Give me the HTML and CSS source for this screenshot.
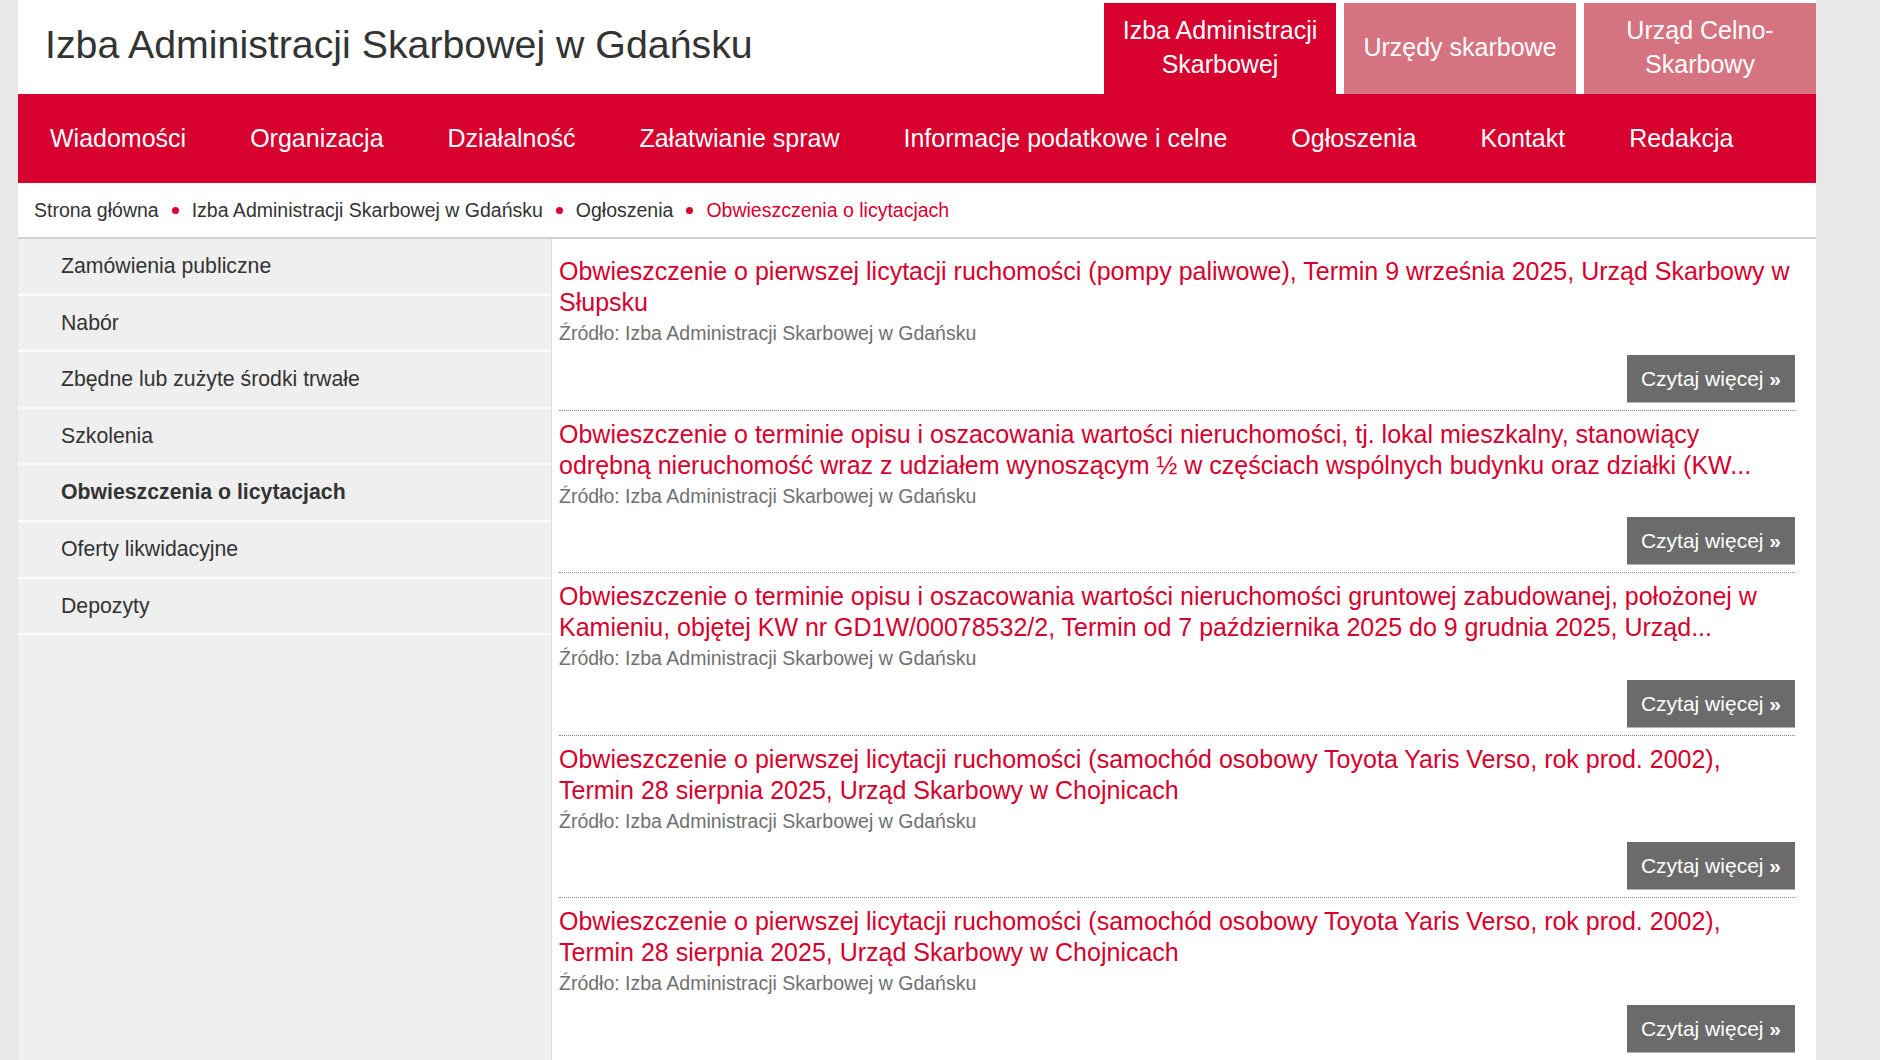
FILE: index.html
```html
<!DOCTYPE html>
<html lang="pl">
<head>
  <meta charset="UTF-8">
  <meta name="viewport" content="width=device-width, initial-scale=1.0">
  <title>Obwieszczenia o licytacjach - Izba Administracji Skarbowej w Gdańsku</title>
  <link rel="stylesheet" href="styles.css">
</head>
<body>
  <div class="page">
    <header class="top">
      <div class="siteName">Izba Administracji Skarbowej w Gdańsku</div>
      <div class="tabs">
        <a class="tab active" href="#">Izba Administracji<br>Skarbowej</a>
        <a class="tab" href="#">Urzędy skarbowe</a>
        <a class="tab" href="#">Urząd Celno-<br>Skarbowy</a>
      </div>
    </header>

    <nav class="mainMenu">
      <a href="#">Wiadomości</a>
      <a href="#">Organizacja</a>
      <a href="#">Działalność</a>
      <a href="#">Załatwianie spraw</a>
      <a href="#">Informacje podatkowe i celne</a>
      <a href="#">Ogłoszenia</a>
      <a href="#">Kontakt</a>
      <a href="#">Redakcja</a>
    </nav>

    <div class="breadcrumbs">
      <a href="#">Strona główna</a><span class="dot"></span>
      <a href="#">Izba Administracji Skarbowej w Gdańsku</a><span class="dot"></span>
      <a href="#">Ogłoszenia</a><span class="dot"></span>
      <span class="current">Obwieszczenia o licytacjach</span>
    </div>

    <div class="main">
      <ul class="sideMenu">
        <li><a href="#">Zamówienia publiczne</a></li>
        <li><a href="#">Nabór</a></li>
        <li><a href="#">Zbędne lub zużyte środki trwałe</a></li>
        <li><a href="#">Szkolenia</a></li>
        <li class="selected"><a href="#">Obwieszczenia o licytacjach</a></li>
        <li><a href="#">Oferty likwidacyjne</a></li>
        <li><a href="#">Depozyty</a></li>
      </ul>

      <div class="content">
        <div class="item">
          <a class="itemTitle" href="#">Obwieszczenie o pierwszej licytacji ruchomości (pompy paliwowe), Termin 9 września 2025, Urząd Skarbowy w Słupsku</a>
          <div class="source">Źródło: Izba Administracji Skarbowej w Gdańsku</div>
          <div class="more"><a href="#">Czytaj więcej <b>»</b></a></div>
        </div>
        <div class="item">
          <a class="itemTitle" href="#">Obwieszczenie o terminie opisu i oszacowania wartości nieruchomości, tj. lokal mieszkalny, stanowiący odrębną nieruchomość wraz z udziałem wynoszącym ½ w częściach wspólnych budynku oraz działki (KW...</a>
          <div class="source">Źródło: Izba Administracji Skarbowej w Gdańsku</div>
          <div class="more"><a href="#">Czytaj więcej <b>»</b></a></div>
        </div>
        <div class="item">
          <a class="itemTitle" href="#">Obwieszczenie o terminie opisu i oszacowania wartości nieruchomości gruntowej zabudowanej, położonej w Kamieniu, objętej KW nr GD1W/00078532/2, Termin od 7 października 2025 do 9 grudnia 2025, Urząd...</a>
          <div class="source">Źródło: Izba Administracji Skarbowej w Gdańsku</div>
          <div class="more"><a href="#">Czytaj więcej <b>»</b></a></div>
        </div>
        <div class="item">
          <a class="itemTitle" href="#">Obwieszczenie o pierwszej licytacji ruchomości (samochód osobowy Toyota Yaris Verso, rok prod. 2002), Termin 28 sierpnia 2025, Urząd Skarbowy w Chojnicach</a>
          <div class="source">Źródło: Izba Administracji Skarbowej w Gdańsku</div>
          <div class="more"><a href="#">Czytaj więcej <b>»</b></a></div>
        </div>
        <div class="item">
          <a class="itemTitle" href="#">Obwieszczenie o pierwszej licytacji ruchomości (samochód osobowy Toyota Yaris Verso, rok prod. 2002), Termin 28 sierpnia 2025, Urząd Skarbowy w Chojnicach</a>
          <div class="source">Źródło: Izba Administracji Skarbowej w Gdańsku</div>
          <div class="more"><a href="#">Czytaj więcej <b>»</b></a></div>
        </div>
      </div>
    </div>
  </div>
</body>
</html>
```

FILE: styles.css
```css
body{
  margin: 0;
  background-color: #e8e8e8;
  font-family: "Liberation Sans", Arial, sans-serif;
  color: #333;
}
a{
  text-decoration: none;
  color: inherit;
}
.page{
  margin-left: 18px;
  width: 1798px;
  min-height: 1060px;
  background-color: #fff;
  display: flex;
  flex-direction: column;
}

/* header */
.top{
  height: 94px;
  display: flex;
  justify-content: space-between;
}
.siteName{
  padding: 21px 0 0 27px;
  font-size: 39.3px;
  line-height: 46px;
  color: #333;
}
.tabs{
  align-self: flex-end;
  display: flex;
  gap: 8px;
}
.tab{
  width: 232px;
  height: 91px;
  box-sizing: border-box;
  padding-bottom: 4px;
  display: flex;
  align-items: center;
  justify-content: center;
  text-align: center;
  font-size: 25px;
  line-height: 34px;
  color: #fff;
  background-color: #d67381;
}
.tab.active{
  background-color: #d7002f;
}

/* main menu */
.mainMenu{
  height: 89px;
  display: flex;
  background-color: #d7002f;
}
.mainMenu a{
  padding: 0 32px;
  font-size: 25px;
  line-height: 89px;
  color: #fff;
}

/* breadcrumbs */
.breadcrumbs{
  height: 54px;
  padding-left: 16px;
  display: flex;
  align-items: center;
  font-size: 19.5px;
  border-bottom: 2px solid #d0d0d0;
}
.breadcrumbs .dot{
  width: 7px;
  height: 7px;
  margin: 0 13px;
  border-radius: 50%;
  background-color: #d7002f;
}
.breadcrumbs .current{
  color: #d7002f;
}

/* columns */
.main{
  flex: 1;
  display: flex;
}
.sideMenu{
  width: 533px;
  margin: 0;
  padding: 0;
  list-style: none;
  background-color: #efefef;
  border-right: 1px solid #dcdcdc;
}
.sideMenu li{
  border-bottom: 2px solid #fafafa;
}
.sideMenu a{
  display: block;
  padding-left: 43px;
  font-size: 21.25px;
  line-height: 54.6px;
  color: #333;
}
.sideMenu .selected a{
  font-weight: bold;
}

.content{
  flex: 1;
  padding: 9px 21px 0 7px;
}
.item{
  padding: 8px 0;
  border-bottom: 1px dotted #888;
}
.itemTitle{
  display: block;
  font-size: 25px;
  line-height: 31px;
  color: #d6002e;
}
.source{
  font-size: 19.5px;
  line-height: 30.5px;
  color: #707070;
}
.more{
  display: flex;
  justify-content: flex-end;
  margin-top: 6px;
}
.more a{
  height: 47px;
  padding: 0 14px;
  font-size: 21px;
  line-height: 47px;
  color: #fff;
  background-color: #6b6b6b;
  box-shadow: 0 1px 0 #b5b5b5;
}
```
